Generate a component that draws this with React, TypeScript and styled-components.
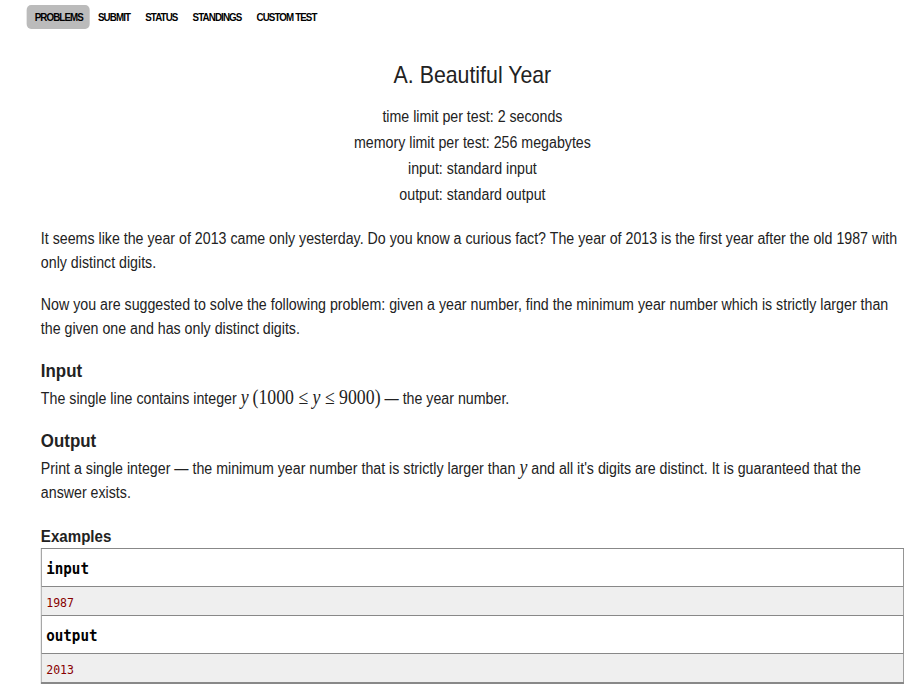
import React from 'react';
import styled, { createGlobalStyle } from 'styled-components';

// the reference is rendered in a condensed face; we squeeze Liberation Sans horizontally
const SQUEEZE = 0.888;
const VIEW_W = 912;

const GlobalStyle = createGlobalStyle`
  html, body {
    margin: 0;
    padding: 0;
    background: #ffffff;
    overflow: hidden;
  }
  body {
    font-family: "Liberation Sans", Arial, sans-serif;
    color: #222222;
  }
`;

const Viewport = styled.div`
  width: ${VIEW_W}px;
  height: 690px;
  overflow: hidden;
`;

const Page = styled.div`
  width: ${Math.round(VIEW_W / SQUEEZE)}px;
  transform: scaleX(${SQUEEZE});
  transform-origin: top left;
`;

const NavBar = styled.ul`
  display: flex;
  align-items: center;
  list-style: none;
  margin: 0;
  padding: 5px 0 0 30px;
  height: 24px;
`;

const NavItem = styled.li<{ $active?: boolean }>`
  height: 24px;
  display: flex;
  align-items: center;
  padding: 0 8px 0 9px;
  border-radius: 5px;
  background: ${p => (p.$active ? '#bbbbbb' : 'transparent')};
  font-weight: bold;
  font-size: 11px;
  letter-spacing: -1px;
  color: #000000;
  text-transform: uppercase;
`;

const Statement = styled.div`
  padding: 0 9px 0 46px;
`;

const Header = styled.div`
  text-align: center;
  padding-top: 32px;
`;

const Title = styled.div`
  font-size: 24px;
  line-height: 28px;
  margin-bottom: 15px;
`;

const Limit = styled.div`
  font-size: 16px;
  line-height: 26px;
`;

const Body = styled.div`
  margin-top: 19px;
`;

const Paragraph = styled.p`
  margin: 0 0 18px;
  font-size: 16px;
  line-height: 24px;
`;

const Section = styled.div`
  margin-bottom: 18px;
`;

const SectionTitle = styled.div`
  font-size: 19px;
  font-weight: bold;
  line-height: 24px;
  margin-top: 2px;
  margin-bottom: 2px;
`;

const MathVar = styled.span`
  font-family: "Liberation Serif", "Times New Roman", serif;
  font-style: italic;
  font-size: 20px;
`;

const MathText = styled.span`
  font-family: "Liberation Serif", "Times New Roman", serif;
  font-size: 20px;
`;

const ExamplesTitle = styled.div`
  font-size: 17px;
  font-weight: bold;
  line-height: 20px;
  margin-top: 22px;
`;

const SampleTable = styled.div`
  border: 1px solid #888888;
  border-bottom-width: 2px;
  margin-top: 1px;
`;

const SampleHead = styled.div<{ $first?: boolean }>`
  font-family: "DejaVu Sans Mono", "Liberation Mono", monospace;
  font-weight: bold;
  font-size: 16px;
  height: 37px;
  line-height: 40px;
  padding-left: 5px;
  border-top: ${p => (p.$first ? 'none' : '1px solid #888888')};
  border-bottom: 1px solid #888888;
  color: #000000;
`;

const SampleData = styled.pre`
  margin: 0;
  font-family: "DejaVu Sans Mono", "Liberation Mono", monospace;
  font-size: 13px;
  height: 28px;
  line-height: 31px;
  padding-left: 5px;
  background: #efefef;
  color: #880000;
`;

const navItems = ['Problems', 'Submit', 'Status', 'Standings', 'Custom Test'];

const Y = () => <MathVar>y</MathVar>;

export default function App() {
  return (
    <Viewport>
      <GlobalStyle />
      <Page>
        <NavBar>
          {navItems.map((item, i) => (
            <NavItem key={item} $active={i === 0}>
              {item}
            </NavItem>
          ))}
        </NavBar>
        <Statement>
          <Header>
            <Title>A. Beautiful Year</Title>
            <Limit>time limit per test: 2 seconds</Limit>
            <Limit>memory limit per test: 256 megabytes</Limit>
            <Limit>input: standard input</Limit>
            <Limit>output: standard output</Limit>
          </Header>
          <Body>
            <Paragraph>
              It seems like the year of 2013 came only yesterday. Do you know a curious fact? The
              year of 2013 is the first year after the old 1987 with only distinct digits.
            </Paragraph>
            <Paragraph>
              Now you are suggested to solve the following problem: given a year number, find the
              minimum year number which is strictly larger than the given one and has only distinct
              digits.
            </Paragraph>
            <Section>
              <SectionTitle>Input</SectionTitle>
              <Paragraph>
                The single line contains integer <Y /> <MathText>(1000 ≤ </MathText>
                <Y />
                <MathText> ≤ 9000)</MathText> — the year number.
              </Paragraph>
            </Section>
            <Section>
              <SectionTitle>Output</SectionTitle>
              <Paragraph>
                Print a single integer — the minimum year number that is strictly larger than <Y />{' '}
                and all it's digits are distinct. It is guaranteed that the answer exists.
              </Paragraph>
            </Section>
            <ExamplesTitle>Examples</ExamplesTitle>
            <SampleTable>
              <SampleHead $first>input</SampleHead>
              <SampleData>1987</SampleData>
              <SampleHead>output</SampleHead>
              <SampleData>2013</SampleData>
            </SampleTable>
          </Body>
        </Statement>
      </Page>
    </Viewport>
  );
}
